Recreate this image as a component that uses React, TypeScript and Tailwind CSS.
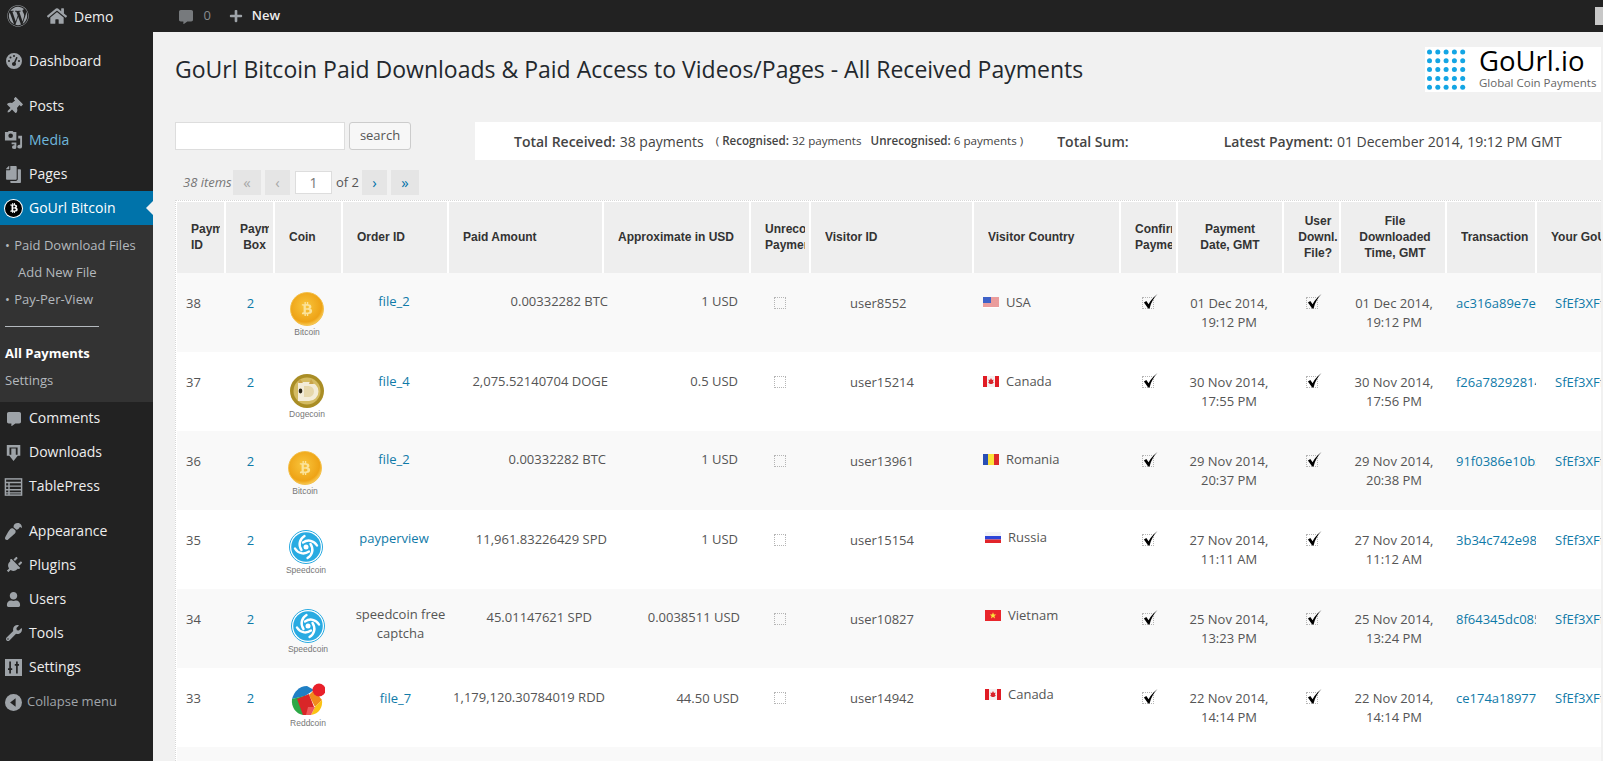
import type { ReactNode } from 'react';
import {
  FaBtc,
  FaCommentAlt,
  FaCopy,
  FaHome,
  FaPaintBrush,
  FaPlug,
  FaPlus,
  FaThumbtack,
  FaUser,
  FaWordpress,
  FaWrench,
} from 'react-icons/fa';
import { FaGaugeHigh } from 'react-icons/fa6';

const OPEN = 'font-["Open_Sans",sans-serif]';

const MediaIcon = () => (
  <svg viewBox="0 0 20 20" className="w-[19px] h-[19px]" fill="#9ea3a8">
    <path d="M1 1h3l1-1h4l1 1h3v9H1z" />
    <circle cx="7" cy="5" r="2.4" fill="#222" />
    <path d="M15 5h4v11.5a2.5 2 0 1 1-2-2V8h-2z" />
    <path d="M8 12h5v5a2.3 2 0 1 1-2-2v-1H8z" />
  </svg>
);

const DownloadIcon = () => (
  <svg viewBox="0 0 20 20" className="w-[18px] h-[18px]" fill="#9ea3a8">
    <path d="M2 1h15v12h-3V4H5v9H2z" />
    <path d="M7 5h5v7h3l-5.500 7L4 12h3z" />
  </svg>
);

const TableIcon = () => (
  <svg viewBox="0 0 20 20" className="w-[19px] h-[18px]" fill="none" stroke="#9ea3a8" strokeWidth="1.600">
    <rect x="1" y="1" width="18" height="18" />
    <path d="M1 5h18M1 9h18M1 13h18M1 16.500h18M5 5v14" />
  </svg>
);

const SettingsIcon = () => (
  <svg viewBox="0 0 20 20" className="w-[17px] h-[17px]">
    <rect width="20" height="20" fill="#9ea3a8" />
    <path d="M6 3v14M14 3v14M3.500 12h5M11.500 7h5" stroke="#222" strokeWidth="2" />
  </svg>
);

const CollapseIcon = () => (
  <svg viewBox="0 0 20 20" className="w-[17px] h-[17px]">
    <circle cx="10" cy="10" r="10" fill="#9ea3a8" />
    <path d="M12.500 5v10L6 10z" fill="#222" />
  </svg>
);

const menuTop: [string, ReactNode, string?][] = [
  ['Posts', <FaThumbtack className="text-[#9ea3a8] text-[17px] rotate-45" />],
  ['Media', <MediaIcon />, 'text-[#6fb7dc]'],
  ['Pages', <FaCopy className="text-[#9ea3a8] text-[17px] -scale-x-100" />],
];

const menuMid: [string, ReactNode][] = [
  ['Comments', <FaCommentAlt className="text-[#9ea3a8] text-[14px]" />],
  ['Downloads', <DownloadIcon />],
  ['TablePress', <TableIcon />],
];

const menuLow: [string, ReactNode][] = [
  ['Appearance', <FaPaintBrush className="text-[#9ea3a8] text-[17px] rotate-180" />],
  ['Plugins', <FaPlug className="text-[#9ea3a8] text-[17px] rotate-45" />],
  ['Users', <FaUser className="text-[#9ea3a8] text-[15px]" />],
  ['Tools', <FaWrench className="text-[#9ea3a8] text-[16px]" />],
  ['Settings', <SettingsIcon />],
];

const MenuItem = ({ label, icon, color, tight }: { label: string; icon: ReactNode; color?: string; tight?: boolean }) => (
  <div className="relative h-[34px] flex items-center">
    <span className="w-[29px] shrink-0 flex justify-center pr-[2px]">{icon}</span>
    <span className={`text-[14px] ${tight ? 'pb-[4px]' : 'pb-[2px]'} ${color ?? 'text-[#eeeeee]'}`}>{label}</span>
  </div>
);

const Sidebar = () => (
  <aside className="w-[153px] shrink-0 bg-[#222222] pt-[12px]">
    <MenuItem label="Dashboard" icon={<FaGaugeHigh className="text-[#9ea3a8] text-[16px]" />} />
    <div className="h-[11px]" />
    {menuTop.map(([label, icon, color]) => (
      <MenuItem key={label} label={label} icon={icon} color={color} />
    ))}
    <div className="relative h-[34px] flex items-center bg-[#0073aa]">
      <span className="w-[29px] shrink-0 flex justify-center pr-[2px]">
        <span className="w-[17px] h-[17px] rounded-full bg-black ring-1 ring-white flex items-center justify-center">
          <FaBtc className="text-white text-[10px]" />
        </span>
      </span>
      <span className="text-[14px] pb-[2px] text-white">GoUrl Bitcoin</span>
      <span className="absolute right-0 top-[10px] border-y-[7px] border-r-[7px] border-y-transparent border-r-[#f1f1f1]" />
    </div>
    <div className="h-[177px] bg-[#333333] pt-[7px] text-[13px] text-[#b4b9be]">
      <div className="h-[27px] leading-[27px] pl-[5px]">• <span className="ml-[1px]">Paid Download Files</span></div>
      <div className="h-[27px] leading-[27px] pl-[18px]">Add New File</div>
      <div className="h-[27px] leading-[27px] pl-[5px]">• <span className="ml-[1px]">Pay-Per-View</span></div>
      <div className="h-[27px] flex items-center pl-[5px]">
        <div className="w-[94px] h-px bg-[#b4b9be]" />
      </div>
      <div className="h-[27px] leading-[27px] pl-[5px] font-bold text-white">All Payments</div>
      <div className="h-[27px] leading-[27px] pl-[5px]">Settings</div>
    </div>
    {menuMid.map(([label, icon]) => (
      <MenuItem key={label} label={label} icon={icon} tight />
    ))}
    <div className="h-[10px]" />
    {menuLow.map(([label, icon]) => (
      <MenuItem key={label} label={label} icon={icon} />
    ))}
    <div className="h-[36px] flex items-center">
      <span className="w-[27px] shrink-0 flex justify-center">
        <CollapseIcon />
      </span>
      <span className="text-[13px] text-[#a0a5aa]">Collapse menu</span>
    </div>
  </aside>
);

const AdminBar = () => (
  <header className="h-[32px] shrink-0 bg-[#222222] flex items-center relative">
    <FaWordpress className="ml-[7px] text-[#9ea3a8] text-[22px]" />
    <FaHome className="ml-[18px] text-[#9ea3a8] text-[20px]" />
    <span className="ml-[7px] text-[14px] text-[#eeeeee]">Demo</span>
    <FaCommentAlt className="ml-[66px] text-[#777a7d] text-[14px] mt-[2px]" />
    <span className="ml-[10px] text-[13px] text-[#888b8e]">0</span>
    <FaPlus className="ml-[18px] text-[#9ea3a8] text-[14px]" />
    <span className="ml-[9px] text-[13px] font-semibold text-[#eeeeee]">New</span>
    <span className="absolute right-0 top-[7px] w-[8px] h-[18px] bg-[#c8c8c8]" />
  </header>
);

const GourlLogo = () => (
  <div className="w-[176px] h-[45px] bg-white flex shrink-0">
    <svg viewBox="0 0 42 42" className="ml-[2px] mt-[2px] w-[42px] h-[42px] shrink-0">
      {[0, 1, 2, 3, 4].flatMap((r) =>
        [0, 1, 2, 3, 4].map((c) => <circle key={`${r}-${c}`} cx={2.500 + c * 8.300} cy={3 + r * 8.800} r="2.500" fill="#13a5e4" />)
      )}
    </svg>
    <div className="ml-[10px] -mt-[1px]">
      <div className="text-[27.500px] leading-[30px] text-black font-medium">GoUrl.io</div>
      <div className="text-[11.500px] leading-[13px] text-[#666666] whitespace-nowrap">Global Coin Payments</div>
    </div>
  </div>
);

const Coin = ({ kind }: { kind: string }) => {
  if (kind === 'Bitcoin') {
    return (
      <div className="w-[34px] h-[34px] rounded-full bg-[radial-gradient(circle_at_45%_40%,#f9c53c,#eea316_62%,#fbd565_80%,#e49a14)] border border-[#f4c04a] flex items-center justify-center">
        <FaBtc className="text-[#fbe39a] text-[14px]" />
      </div>
    );
  }
  if (kind === 'Dogecoin') {
    return (
      <svg viewBox="0 0 34 34" className="w-[34px] h-[34px]">
        <circle cx="17" cy="17" r="17" fill="#a98d25" />
        <circle cx="17" cy="17" r="13.500" fill="#d4bb62" />
        <path d="M8 8h11a9.500 9.500 0 0 1 0 19H8z" fill="#f3ecd8" />
        <path d="M14 12h4.500a5.500 5.500 0 0 1 0 11H14z" fill="#e6d7ab" />
        <ellipse cx="10.500" cy="17" rx="1.800" ry="2.400" fill="#2b2416" />
        <path d="M10 5l3 4h-5zM21 5l3 5h-5z" fill="#c9a44a" />
      </svg>
    );
  }
  if (kind === 'Speedcoin') {
    return (
      <svg viewBox="0 0 34 34" className="w-[34px] h-[34px]">
        <circle cx="17" cy="17" r="16.500" fill="#fff" stroke="#29abe2" />
        <circle cx="17" cy="17" r="14.800" fill="#29abe2" />
        <g fill="none" stroke="#fff" strokeWidth="2.400" strokeLinecap="round">
          <path d="M14 12.500c5-3.500 11-2 14 3" />
          <path d="M21.500 14c3.500 5 2 11-3 14" />
          <path d="M20 21.500c-5 3.500-11 2-14-3" />
          <path d="M12.500 20c-3.500-5-2-11 3-14" />
        </g>
        <circle cx="17" cy="17" r="2.500" fill="#fff" />
      </svg>
    );
  }
  return (
    <svg viewBox="0 0 34 34" className="w-[34px] h-[34px]">
      <path d="M16 3C8 3 3 9 1 16l13-3 9-6z" fill="#1f7fc4" />
      <path d="M1 16c-1 8 4 15 11 16l3-8-2-11z" fill="#2ca846" />
      <path d="M6 16l12-5 5 13-6 8-5 0z" fill="#d92628" />
      <path d="M23 7l8 10-7 7-6-12z" fill="#f28a1c" />
      <path d="M24 24l7-7c1 7-3 14-11 15z" fill="#fbc313" />
      <path d="M17 24l7 0-4 8-5 0z" fill="#f0595a" />
      <circle cx="28" cy="7" r="6.500" fill="#e8202a" />
    </svg>
  );
};

const Check = ({ on }: { on?: boolean }) => (
  <span className="relative block w-[12px] h-[12px] border border-dotted border-[#b5b5b5]">
    {on && (
      <svg viewBox="0 0 16 16" className="absolute left-[0px] top-[-4px] w-[15px] h-[15px]">
        <path d="M1 9l2.500-1.500L6 11C8 7 11 3.500 15.500 0c-4 4-7 9-8.500 15.500H5.500z" fill="#000" />
      </svg>
    )}
  </span>
);

const Flag = ({ name }: { name: string }) => {
  if (name === 'USA') {
    return (
      <svg viewBox="0 0 16 11" className="w-[16px] h-[11px]">
        <rect width="16" height="11" fill="#fff" />
        <path d="M0 1h16M0 3h16M0 5h16M0 7h16M0 9h16" stroke="#d63a3a" />
        <rect width="8" height="6" fill="#3f62c8" />
      </svg>
    );
  }
  if (name === 'Canada') {
    return (
      <svg viewBox="0 0 16 11" className="w-[16px] h-[11px]">
        <rect width="16" height="11" fill="#f4f0f0" />
        <rect width="4" height="11" fill="#e01b24" />
        <rect x="12" width="4" height="11" fill="#e01b24" />
        <path d="M8 2l1 2 1.500-.5-.5 2.500 1 .5L9 8H7L5 6.500l1-.5-.5-2.500L7 4z" fill="#d8232a" />
      </svg>
    );
  }
  if (name === 'Romania') {
    return (
      <svg viewBox="0 0 16 11" className="w-[16px] h-[11px]">
        <rect width="6" height="11" fill="#2a4fb5" />
        <rect x="5" width="6" height="11" fill="#fbe23a" />
        <rect x="11" width="5" height="11" fill="#dc2a2a" />
      </svg>
    );
  }
  if (name === 'Russia') {
    return (
      <svg viewBox="0 0 16 11" className="w-[16px] h-[11px]">
        <rect width="16" height="4" fill="#f2f2f6" />
        <rect y="4" width="16" height="3.500" fill="#2d45d8" />
        <rect y="7.500" width="16" height="3.500" fill="#e2242a" />
      </svg>
    );
  }
  return (
    <svg viewBox="0 0 16 11" className="w-[16px] h-[11px]">
      <rect width="16" height="11" fill="#e9262c" />
      <path d="M8 2.200l.9 2.300h2.400l-1.900 1.500.7 2.400L8 7l-2.100 1.400.7-2.400-1.900-1.500h2.400z" fill="#fbe23a" />
    </svg>
  );
};

const headers: { label: ReactNode; cls: string }[] = [
  { label: 'Payment ID', cls: 'pl-[14px] pr-[4px] text-left' },
  { label: 'Payment Box', cls: 'pl-[14px] pr-[4px] text-center' },
  { label: 'Coin', cls: 'pl-[14px] pr-[4px] text-left' },
  { label: 'Order ID', cls: 'pl-[14px] pr-[4px] text-left' },
  { label: 'Paid Amount', cls: 'pl-[14px] pr-[4px] text-left' },
  { label: 'Approximate in USD', cls: 'pl-[14px] pr-[4px] text-left' },
  { label: 'Unrecognised Payment', cls: 'pl-[14px] pr-[4px] text-center' },
  { label: 'Visitor ID', cls: 'pl-[14px] pr-[4px] text-left' },
  { label: 'Visitor Country', cls: 'pl-[14px] pr-[4px] text-left' },
  { label: 'Confirmed Payment', cls: 'pl-[14px] pr-[4px] text-center' },
  { label: <>Payment<br />Date, GMT</>, cls: 'pl-[4px] pr-[4px] text-center' },
  { label: 'User Downl. File?', cls: 'pl-[14px] pr-[1px] text-center' },
  { label: 'File Downloaded Time, GMT', cls: 'pl-[8px] pr-[4px] text-center' },
  { label: 'Transaction', cls: 'pl-[14px] pr-[4px] text-left' },
  { label: 'Your GoUrl Payment Box', cls: 'pl-[14px] pr-[4px] text-left whitespace-nowrap' },
];

const widths = [49, 49, 68, 106, 155, 147, 60, 163, 147, 57, 106, 57, 106, 90, 163];

const rows = [
  { id: 38, coin: 'Bitcoin', coinCls: 'pt-[19px] ml-[15px]', order: 'file_2', orderCls: 'pt-[19px] pr-[4px]', amt: '0.00332282 BTC', amtCls: 'pt-[19px] -mr-[4px]', usd: '1 USD', usdCls: 'pt-[19px]', user: 'user8552', flag: 'USA', country: 'USA', flagCls: 'pt-[20px] pl-[9px]', d1: '01 Dec 2014,', t1: '19:12 PM', d2: '01 Dec 2014,', t2: '19:12 PM', tx: 'ac316a89e7e41fa0c2' },
  { id: 37, coin: 'Dogecoin', coinCls: 'pt-[22px] ml-[15px]', order: 'file_4', orderCls: 'pt-[20px] pr-[4px]', amt: '2,075.52140704 DOGE', amtCls: 'pt-[20px] -mr-[4px]', usd: '0.5 USD', usdCls: 'pt-[20px]', user: 'user15214', flag: 'Canada', country: 'Canada', flagCls: 'pt-[20px] pl-[9px]', d1: '30 Nov 2014,', t1: '17:55 PM', d2: '30 Nov 2014,', t2: '17:56 PM', tx: 'f26a7829281470bd93' },
  { id: 36, coin: 'Bitcoin', coinCls: 'pt-[20px] ml-[13px]', order: 'file_2', orderCls: 'pt-[19px] pr-[4px]', amt: '0.00332282 BTC', amtCls: 'pt-[19px] -mr-[2px]', usd: '1 USD', usdCls: 'pt-[19px]', user: 'user13961', flag: 'Romania', country: 'Romania', flagCls: 'pt-[19px] pl-[9px]', d1: '29 Nov 2014,', t1: '20:37 PM', d2: '29 Nov 2014,', t2: '20:38 PM', tx: '91f0386e10b52ac7d4' },
  { id: 35, coin: 'Speedcoin', coinCls: 'pt-[20px] ml-[14px]', order: 'payperview', orderCls: 'pt-[19px] pr-[4px]', amt: '11,961.83226429 SPD', amtCls: 'pt-[20px] -mr-[3px]', usd: '1 USD', usdCls: 'pt-[20px]', user: 'user15154', flag: 'Russia', country: 'Russia', flagCls: 'pt-[18px] pl-[11px]', d1: '27 Nov 2014,', t1: '11:11 AM', d2: '27 Nov 2014,', t2: '11:12 AM', tx: '3b34c742e98fd0716a' },
  { id: 34, coin: 'Speedcoin', coinCls: 'pt-[20px] ml-[16px]', order: 'speedcoin free captcha', orderCls: 'pt-[16px] pl-[9px]', amt: '45.01147621 SPD', amtCls: 'pt-[19px] mr-[12px]', usd: '0.0038511 USD', usdCls: 'pt-[19px] -mr-[2px]', user: 'user10827', flag: 'Vietnam', country: 'Vietnam', flagCls: 'pt-[17px] pl-[11px]', d1: '25 Nov 2014,', t1: '13:23 PM', d2: '25 Nov 2014,', t2: '13:24 PM', tx: '8f64345dc085be2961' },
  { id: 33, coin: 'Reddcoin', coinCls: 'pt-[15px] ml-[16px]', order: 'file_7', orderCls: 'pt-[21px] pr-[1px]', amt: '1,179,120.30784019 RDD', amtCls: 'pt-[20px] -mr-[1px]', usd: '44.50 USD', usdCls: 'pt-[21px] -mr-[1px]', user: 'user14942', flag: 'Canada', country: 'Canada', flagCls: 'pt-[17px] pl-[11px]', d1: '22 Nov 2014,', t1: '14:14 PM', d2: '22 Nov 2014,', t2: '14:14 PM', tx: 'ce174a18977d30b6f2' },
];

const LINK = 'text-[#0f7aa8]';

const PaymentsTable = () => (
  <div className="mt-[5px] border-l border-t border-dotted border-[#d8d8d8] bg-white pl-px pt-px overflow-hidden">
    <table className="table-fixed border-separate border-spacing-0 w-[1523px]">
      <colgroup>
        {widths.map((w, i) => (
          <col key={i} style={{ width: w }} />
        ))}
      </colgroup>
      <thead>
        <tr>
          {headers.map((h, i) => (
            <th key={i} className="h-[71px] p-0 pb-[2px] bg-[#eeeeee] border-r-2 border-white font-bold">
              <div className={h.cls}>
                <div className='overflow-hidden font-["Liberation_Sans",sans-serif] text-[12px] leading-[16px] text-[#333333]'>
                  {h.label}
                </div>
              </div>
            </th>
          ))}
        </tr>
      </thead>
      <tbody className="text-[13px] leading-[19px] text-[#555555]">
        {rows.map((r, i) => (
          <tr key={r.id} className={`h-[79px] ${i % 2 === 0 ? 'bg-[#f9f9f9]' : 'bg-white'}`}>
            <td className="align-top p-0 pl-[9px] pt-[21px]">{r.id}</td>
            <td className="align-top p-0 pt-[21px] text-center"><span className={LINK}>2</span></td>
            <td className="align-top p-0">
              <div className={`flex flex-col items-center w-[34px] ${r.coinCls}`}>
                <Coin kind={r.coin} />
                <span className="mt-[1px] font-['Liberation_Sans',sans-serif] text-[8.500px] leading-[11px] text-[#777777]">{r.coin}</span>
              </div>
            </td>
            <td className={`align-top p-0 text-center ${r.orderCls}`}>
              <span className={r.order.startsWith('speed') ? '' : LINK}>{r.order}</span>
            </td>
            <td className="align-top p-0"><div className={`text-right whitespace-nowrap ${r.amtCls}`}>{r.amt}</div></td>
            <td className="align-top p-0 pr-[13px]"><div className={`text-right whitespace-nowrap ${r.usdCls}`}>{r.usd}</div></td>
            <td className="align-top p-0 pl-[23px] pt-[24px]"><Check /></td>
            <td className="align-top p-0 pl-[39px] pt-[21px]">{r.user}</td>
            <td className="align-top p-0">
              <div className={`flex items-center ${r.flagCls}`}>
                <Flag name={r.flag} />
                <span className="ml-[7px]">{r.country}</span>
              </div>
            </td>
            <td className="align-top p-0 pl-[21px] pt-[24px]"><Check on /></td>
            <td className="align-top p-0 pt-[21px] pr-[4px] text-center">{r.d1}<br />{r.t1}</td>
            <td className="align-top p-0 pl-[22px] pt-[24px]"><Check on /></td>
            <td className="align-top p-0 pt-[21px] text-center">{r.d2}<br />{r.t2}</td>
            <td className="align-top p-0 pl-[9px] pr-[1px] pt-[21px]"><div className={`overflow-hidden whitespace-nowrap ${LINK}`}>{r.tx}</div></td>
            <td className="align-top p-0 pl-[18px] pt-[21px]"><div className={`whitespace-nowrap ${LINK}`}>SfEf3XFfwL8n3Yk</div></td>
          </tr>
        ))}
        <tr className="h-[40px] bg-[#f9f9f9]"><td colSpan={15} /></tr>
      </tbody>
    </table>
  </div>
);

export default function App() {
  return (
    <div className={`h-[761px] w-full overflow-hidden flex flex-col bg-[#f1f1f1] ${OPEN}`}>
      <AdminBar />
      <div className="flex flex-1 min-h-0">
        <Sidebar />
        <main className="flex-1 min-w-0 pl-[22px] pr-[2px] overflow-hidden">
          <div className="flex justify-between items-start mt-[15px] h-[45px]">
            <h1 className="text-[23px] leading-[44px] text-[#23282d] whitespace-nowrap">
              GoUrl Bitcoin Paid Downloads &amp; Paid Access to Videos/Pages - All Received Payments
            </h1>
            <GourlLogo />
          </div>

          <div className="flex items-start mt-[30px]">
            <input className="w-[170px] h-[28px] bg-white border border-[#dddddd] outline-none" />
            <button className="ml-[4px] w-[62px] h-[28px] bg-[#f7f7f7] border border-[#cccccc] rounded-[3px] text-[13px] text-[#555555]">search</button>
            <div className="ml-[64px] flex-1 h-[38px] bg-white flex items-center text-[14px] text-[#444444] whitespace-nowrap">
              <span className="ml-[39px] font-semibold">Total Received:</span>
              <span className="ml-[4px]">38 payments</span>
              <span className="ml-[12px] text-[11.600px]">( <span className="font-semibold">Recognised:</span> 32 payments</span>
              <span className="ml-[9px] text-[11.600px]"><span className="font-semibold">Unrecognised:</span> 6 payments )</span>
              <span className="ml-[34px] font-semibold">Total Sum:</span>
              <span className="ml-[95px] font-semibold">Latest Payment:</span>
              <span className="ml-[4px]">01 December 2014, 19:12 PM GMT</span>
            </div>
          </div>

          <div className="flex items-center h-[25px] mt-[10px] text-[13px] text-[#555555]">
            <span className="ml-[8px] italic text-[#777777] w-[50px]">38 items</span>
            <span className="w-[28px] h-[25px] bg-[#e5e5e5] text-[#a8a8a8] text-[15px] flex items-center justify-center">«</span>
            <span className="ml-[4px] w-[25px] h-[25px] bg-[#e5e5e5] text-[#a8a8a8] text-[15px] flex items-center justify-center">‹</span>
            <span className="ml-[5px] w-[37px] h-[23px] bg-white border border-[#dddddd] text-[14px] text-[#777777] flex items-center justify-center">1</span>
            <span className="ml-[4px] w-[26px]">of 2</span>
            <span className="w-[25px] h-[25px] bg-[#e5e5e5] text-[#0073aa] text-[15px] flex items-center justify-center">›</span>
            <span className="ml-[4px] w-[28px] h-[25px] bg-[#e5e5e5] text-[#0073aa] text-[15px] flex items-center justify-center">»</span>
          </div>

          <PaymentsTable />
        </main>
      </div>
    </div>
  );
}
